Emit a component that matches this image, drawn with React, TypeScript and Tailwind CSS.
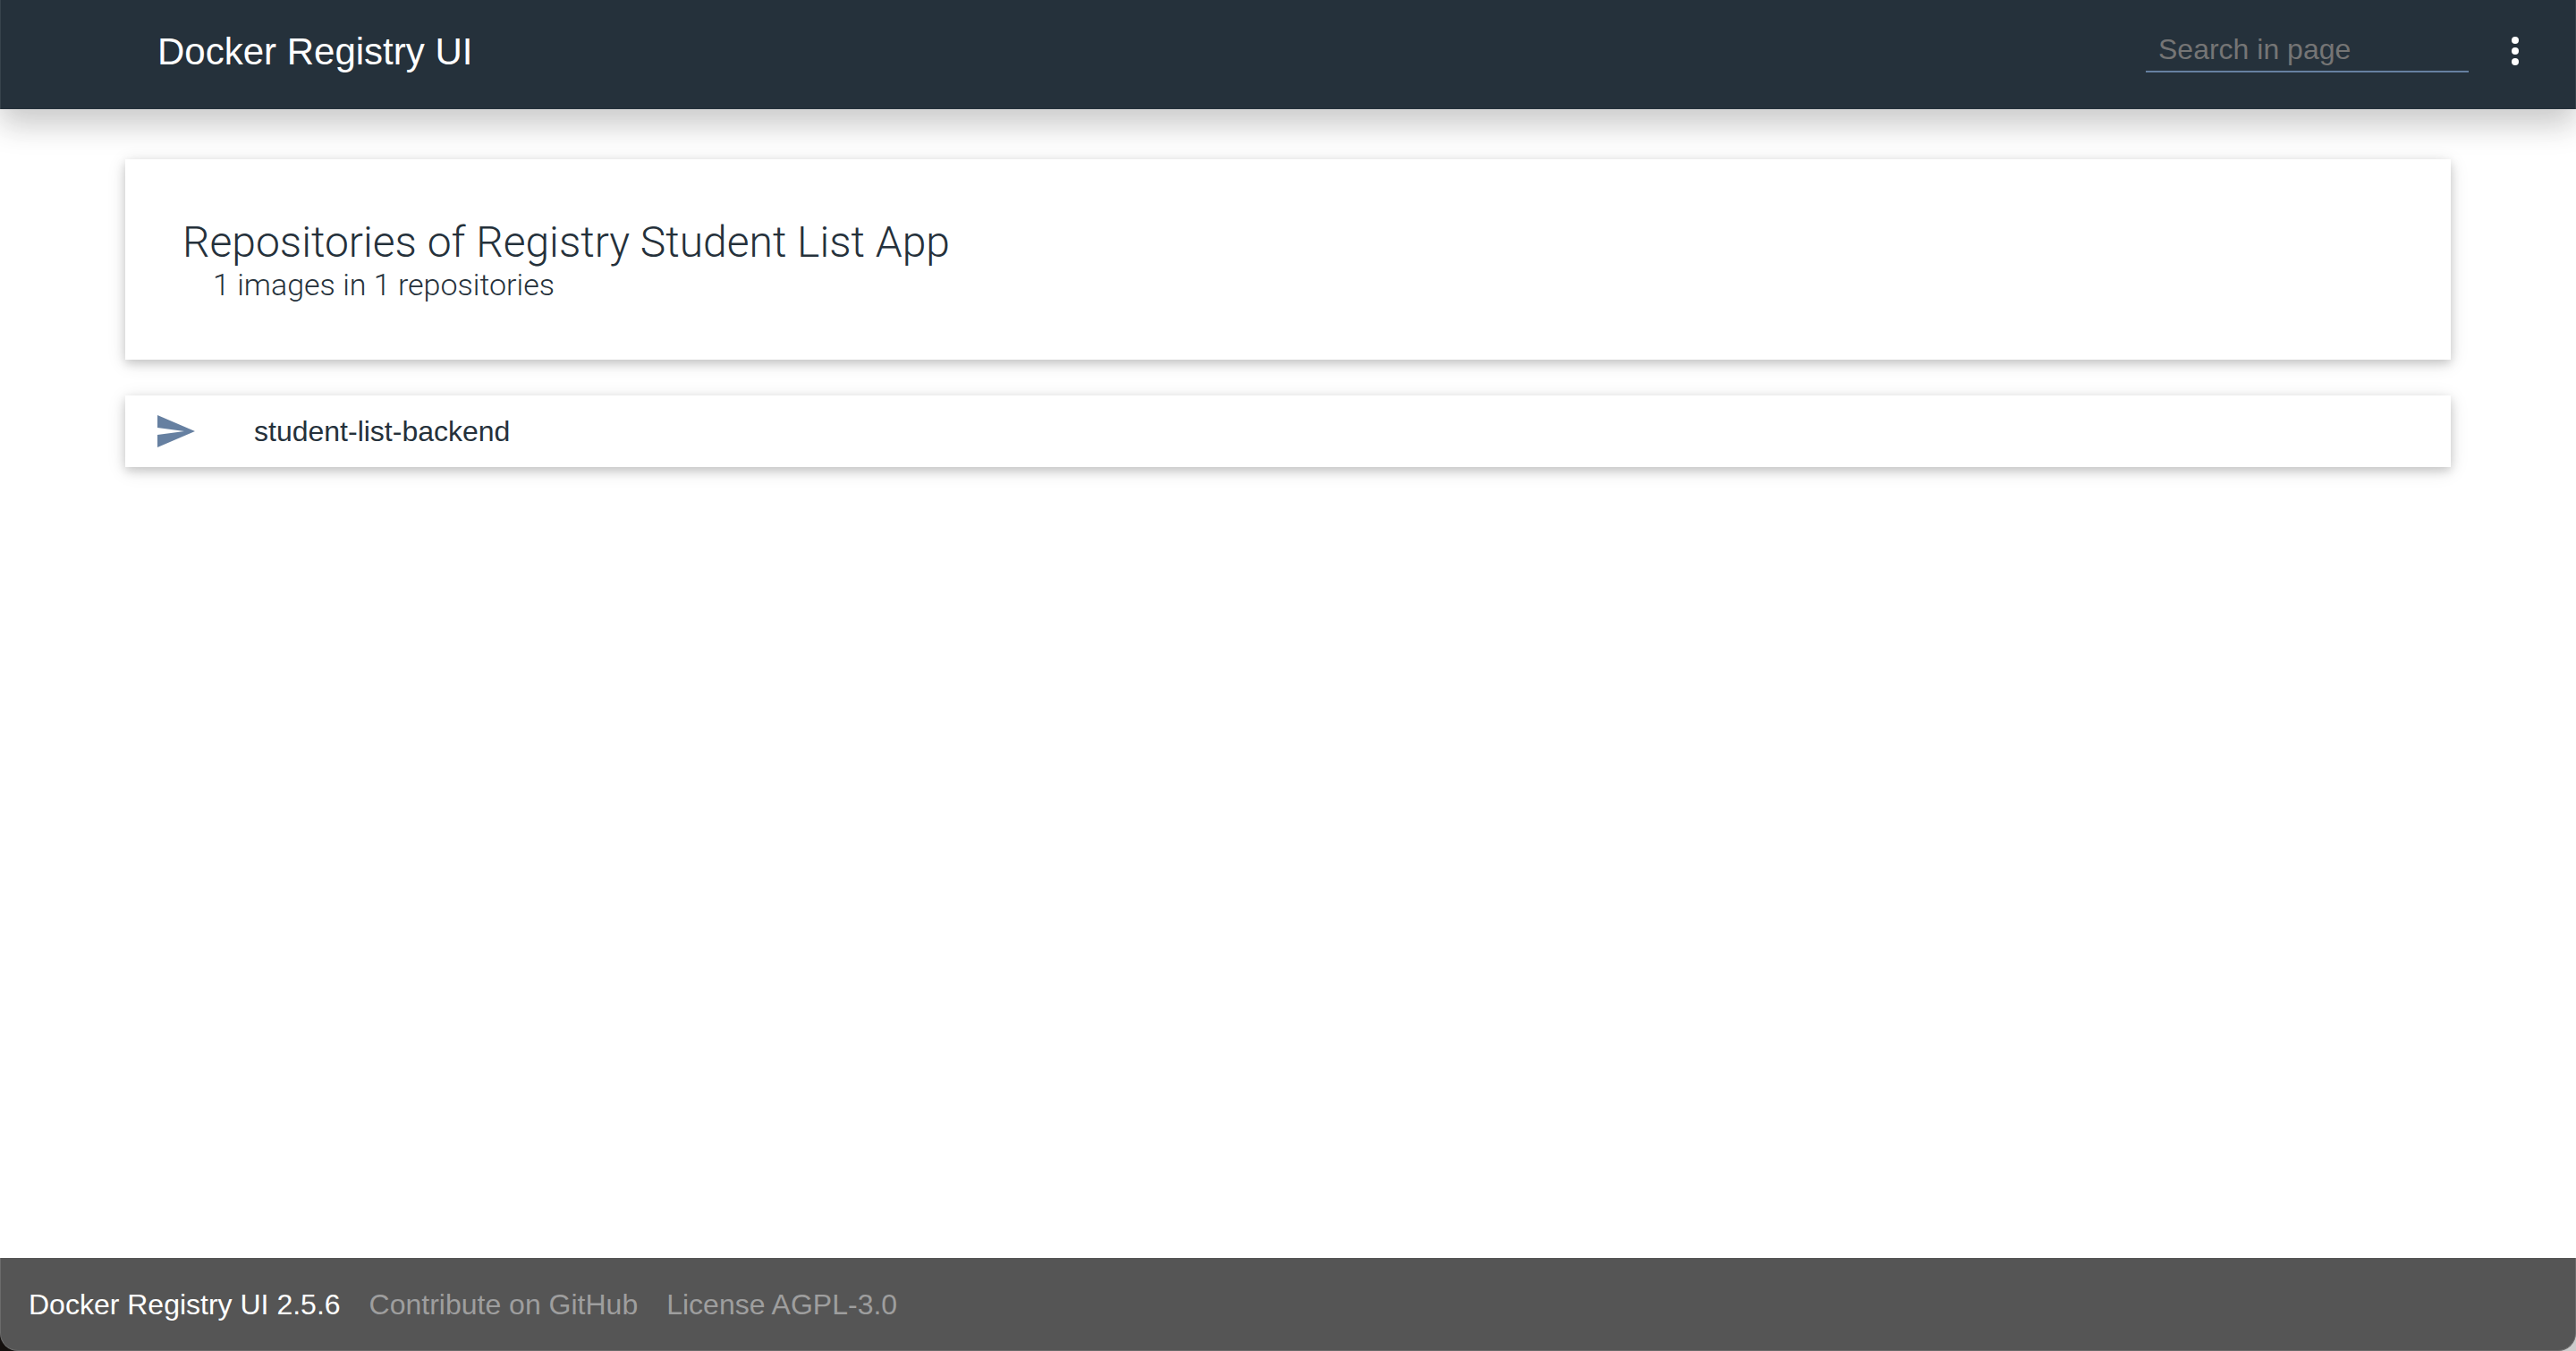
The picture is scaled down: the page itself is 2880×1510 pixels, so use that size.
import React from "react";

const cardShadow = "shadow-[0_4px_10px_0_rgba(0,0,0,0.16),0_4px_20px_0_rgba(0,0,0,0.12)]";

function Header() {
  return (
    <header className="flex h-[122px] items-start justify-between border-x border-[#37434c] bg-[#25313b] pl-[175px] pr-[43px] shadow-[0_18px_32px_0_rgba(0,0,0,0.18),0_12px_40px_0_rgba(0,0,0,0.04)]">
      <h1 className="mt-7 text-[42px] leading-[60px] text-white">Docker Registry UI</h1>
      <div className="flex items-start">
        <input
          type="text"
          aria-label="Search in page"
          placeholder="Search in page"
          className="mt-8 h-[49px] w-[361px] border-b-2 border-[#6680a1] bg-transparent px-3.5 text-[32px] text-white outline-none placeholder:text-[#757575]"
        />
        <button type="button" aria-label="Menu" className="ml-7 mt-[33px] text-white">
          <svg viewBox="0 0 24 24" className="size-12" fill="currentColor">
            <circle cx="12" cy="6" r="2" />
            <circle cx="12" cy="12" r="2" />
            <circle cx="12" cy="18" r="2" />
          </svg>
        </button>
      </div>
    </header>
  );
}

function Footer() {
  return (
    <footer className="bg-[linear-gradient(to_right,#14100e_50%,#cccccc_50%)]">
      <div className="flex h-[104px] items-center gap-8 rounded-b-[20px] border-x border-b border-[#6b6b6b] bg-[#555555] px-[31px] text-[32px] leading-10 text-[#9e9e9e]">
        <span className="text-white">Docker Registry UI 2.5.6</span>
        <a href="#github">Contribute on GitHub</a>
        <a href="#license">License AGPL-3.0</a>
      </div>
    </footer>
  );
}

export default function App() {
  return (
    <div className="flex min-h-screen flex-col bg-white font-['Liberation_Sans',Arial,sans-serif] text-[#25313b]">
      <Header />
      <main className="flex flex-1 flex-col gap-10 px-[140px] pt-14">
        <section className={`h-56 bg-white px-16 pt-16 font-[Roboto,sans-serif] font-light ${cardShadow}`}>
          <h2 className="text-[48px] leading-[58px]">Repositories of Registry Student List App</h2>
          <p className="pl-[34px] text-[34px] leading-9">1 images in 1 repositories</p>
        </section>
        <a href="#student-list-backend" className={`flex h-20 items-center bg-white px-8 ${cardShadow}`}>
          <svg viewBox="0 0 24 24" className="size-12 text-[#6680a1]" fill="currentColor" aria-hidden="true">
            <path d="M2.01 21L23 12 2.01 3 2 10l15 2-15 2z" />
          </svg>
          <span className="ml-16 text-[32px] leading-10">student-list-backend</span>
        </a>
      </main>
      <Footer />
    </div>
  );
}
